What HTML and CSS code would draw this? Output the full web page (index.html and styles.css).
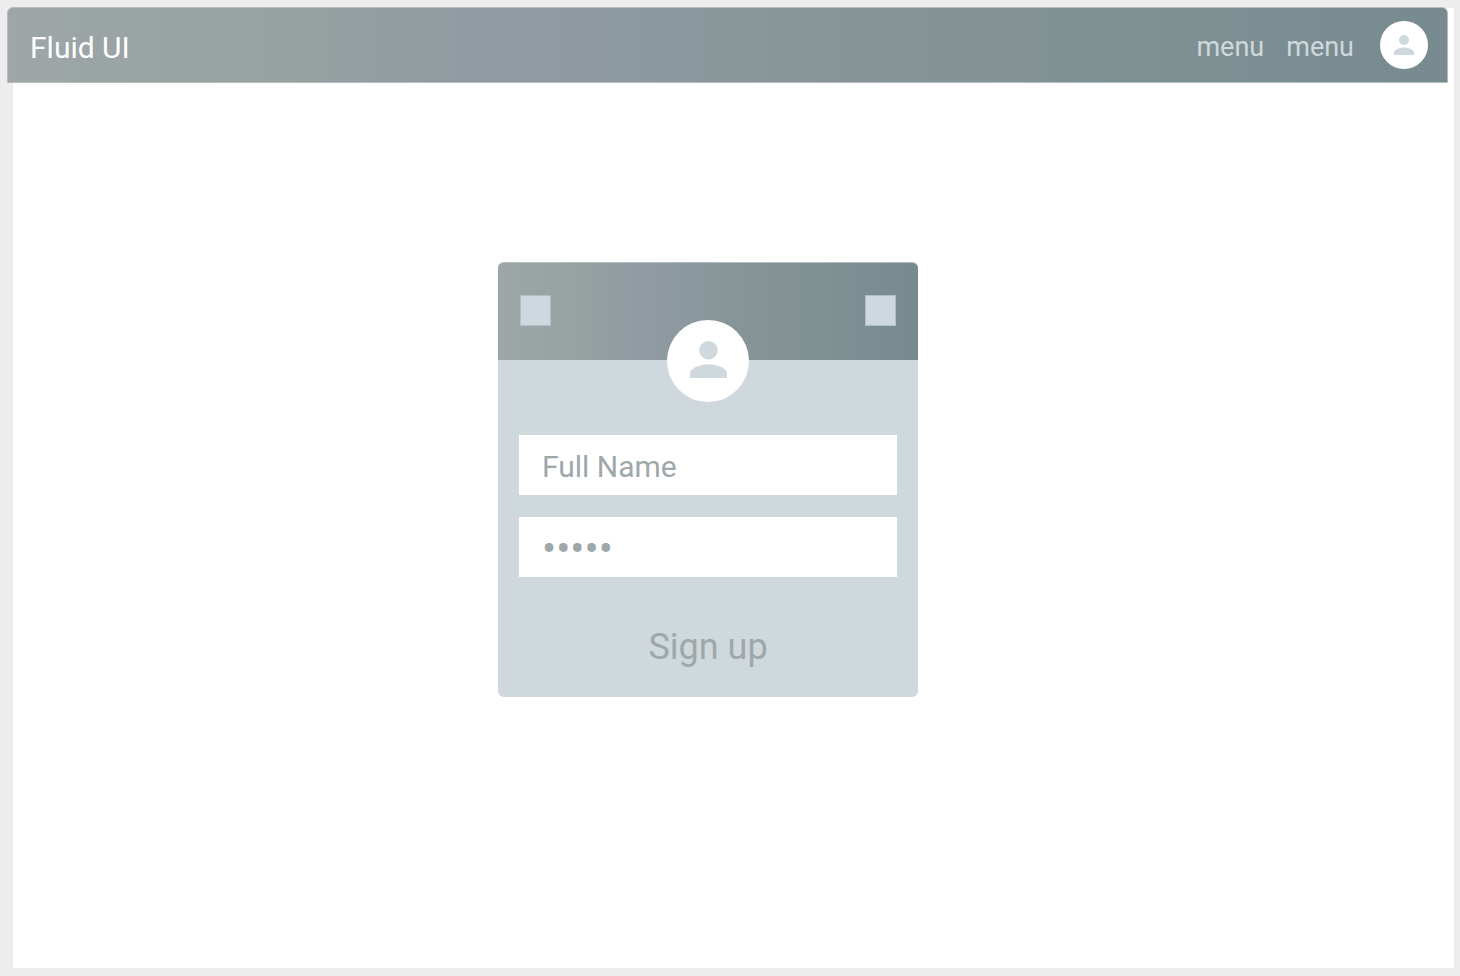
FILE: index.html
```html
<!DOCTYPE html>
<html lang="en">
<head>
  <meta charset="utf-8">
  <meta name="viewport" content="width=device-width, initial-scale=1">
  <title>Fluid UI</title>
  <link rel="stylesheet" href="styles.css">
</head>
<body>
  <div class="page">
    <header class="topbar">
      <h1 class="brand">Fluid UI</h1>
      <nav class="nav">
        <a class="nav-link" href="#one">menu</a>
        <a class="nav-link" href="#two">menu</a>
      </nav>
      <a class="avatar" href="#profile" aria-label="Profile">
        <svg class="person" viewBox="4 4 16 16" aria-hidden="true"><circle cx="12" cy="8" r="4"/><path d="M4 18v2h16v-2c0-2.660-5.330-4-8-4s-8 1.340-8 4z"/></svg>
      </a>
    </header>
    <main class="content">
      <form class="card">
        <div class="card-head">
          <button class="square" type="button" aria-label="Back"></button>
          <div class="avatar avatar-large">
            <svg class="person" viewBox="4 4 16 16" aria-hidden="true"><circle cx="12" cy="8" r="4"/><path d="M4 18v2h16v-2c0-2.660-5.330-4-8-4s-8 1.340-8 4z"/></svg>
          </div>
          <button class="square" type="button" aria-label="Options"></button>
        </div>
        <div class="fields">
          <input class="field" type="text" placeholder="Full Name" aria-label="Full Name">
          <input class="field field-password" type="password" value="fluid" aria-label="Password">
          <button class="submit" type="submit">Sign up</button>
        </div>
      </form>
    </main>
  </div>
</body>
</html>
```
FILE: styles.css
```css
* {
  box-sizing: border-box;
}

body {
  margin: 0;
  padding: 7px 6px 8px 7px;
  background: #ededed;
  color: #9ea7a9;
  font-family: Roboto, "Liberation Sans", sans-serif;
}

.page {
  display: flex;
  flex-direction: column;
  min-height: calc(100vh - 15px);
  background: linear-gradient(#fff, #fff) 6px 1px no-repeat;
}

.topbar,
.card-head {
  background: linear-gradient(90deg, #9ea6a7 0%, #96a1a1 20%, #929da2 28%, #8f9ba1 37%, #849396 63%, #7e9092 82%, #768a90 100%);
}

.topbar {
  display: flex;
  align-items: center;
  height: 76px;
  margin-right: 6px;
  padding: 0 19px 0 22px;
  border: 1px solid #b3bdc0;
  border-radius: 6px 6px 0 0;
}

.brand {
  margin: 0 auto 0 0;
  padding-top: 4px;
  color: #fff;
  font-size: 30px;
  font-weight: 400;
}

.nav {
  display: flex;
  gap: 22px;
  margin-right: 26px;
  padding-top: 4px;
}

.nav-link {
  color: #cfd8dc;
  font-size: 27px;
  text-decoration: none;
}

.avatar {
  display: flex;
  align-items: center;
  justify-content: center;
  width: 48px;
  height: 48px;
  border-radius: 50%;
  background: #fff;
}

.person {
  width: 20px;
  height: 20px;
  fill: #cfd8dc;
}

.content {
  display: flex;
  justify-content: center;
  padding: 179px 45px 40px 0;
}

.card {
  width: 420px;
  border-radius: 6px;
  background: #cfd8dd;
}

.card-head {
  display: flex;
  justify-content: space-between;
  height: 98px;
  padding: 32px 22px 0;
  border-top: 1px solid #b3bdc0;
  border-radius: 6px 6px 0 0;
}

.square {
  width: 31px;
  height: 31px;
  padding: 0;
  border: 1px solid #b0bec5;
  background: #cfd8df;
}

.avatar-large {
  width: 82px;
  height: 82px;
  margin-top: 25px;
  padding-bottom: 4px;
}

.avatar-large .person {
  width: 37px;
  height: 37px;
}

.fields {
  display: flex;
  flex-direction: column;
  gap: 22px;
  padding: 75px 21px 20px;
}

.field {
  width: 100%;
  height: 60px;
  padding: 2px 23px 0;
  border: 0;
  border-radius: 0;
  background: #fff;
  color: #9ea7a9;
  font: 30px Roboto, "Liberation Sans", sans-serif;
}

.field::placeholder {
  color: #9ea7a9;
  opacity: 1;
}

.field-password {
  font-size: 42px;
}

.submit {
  height: 60px;
  margin-top: 18px;
  padding: 0;
  border: 0;
  background: none;
  color: #9ea7a9;
  font: 36px Roboto, "Liberation Sans", sans-serif;
}
```
